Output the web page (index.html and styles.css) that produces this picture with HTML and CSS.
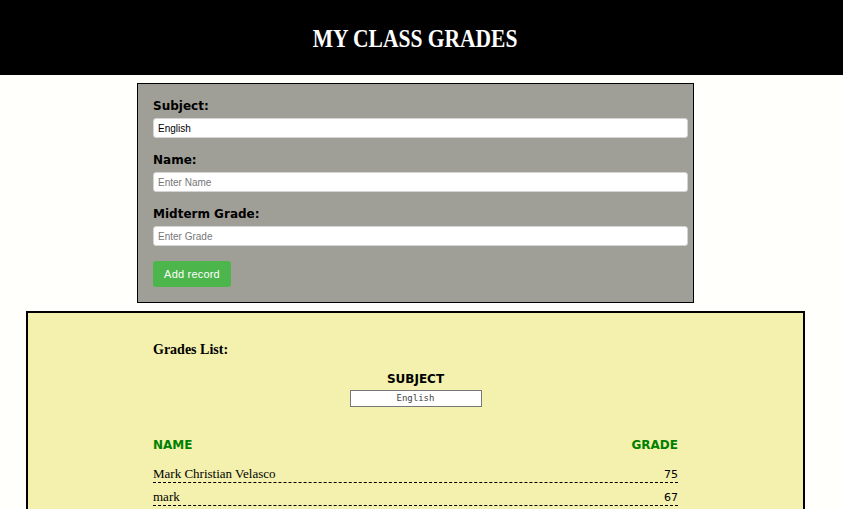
FILE: index.html
```html
<!DOCTYPE html>
<html lang="en">
<head>
<meta charset="utf-8">
<title>My Class Grades</title>
<link rel="stylesheet" href="styles.css">
</head>
<body>
<header class="top">
  <h1 class="title">MY CLASS GRADES</h1>
</header>
<main class="page">
  <form class="entry">
    <label class="field-label">Subject:</label>
    <input class="field" type="text" value="English">
    <label class="field-label">Name:</label>
    <input class="field" type="text" placeholder="Enter Name">
    <label class="field-label">Midterm Grade:</label>
    <input class="field" type="text" placeholder="Enter Grade">
    <button class="add-btn" type="button">Add record</button>
  </form>
  <section class="grades">
    <div class="grades-inner">
      <h2 class="grades-title">Grades List:</h2>
      <div class="subject">
        <h3 class="subject-title">SUBJECT</h3>
        <div class="subject-box">English</div>
      </div>
      <div class="list-head"><span>NAME</span><span>GRADE</span></div>
      <div class="row"><span class="row-name">Mark Christian Velasco</span><span class="row-grade">75</span></div>
      <div class="row"><span class="row-name">mark</span><span class="row-grade">67</span></div>
    </div>
  </section>
</main>
</body>
</html>
```
FILE: styles.css
```css
html, body {
  margin: 0;
  padding: 0;
}
body {
  background: #fffffb;
  font-family: "DejaVu Sans", Verdana, sans-serif;
  width: 843px;
  height: 509px;
  overflow: hidden;
}
.top {
  background: #000;
  height: 75px;
  box-sizing: border-box;
  padding: 3px 12px 0 0;
  display: flex;
  align-items: center;
  justify-content: center;
}
.title {
  margin: 0;
  color: #fff;
  font-family: "Liberation Serif", "Times New Roman", serif;
  font-weight: bold;
  font-size: 25px;
  transform: scaleX(0.86);
}
.page {
  width: 831px;
}
.entry {
  width: 557px;
  box-sizing: border-box;
  margin: 8px auto 0;
  border: 1px solid #000;
  background: #a09f97;
  padding: 15px 5px 15px 15px;
  display: flex;
  flex-direction: column;
  align-items: flex-start;
}
.field-label {
  font-weight: bold;
  font-size: 12px;
  line-height: 14px;
  color: #000;
  margin-bottom: 5px;
}
.field {
  width: 535px;
  height: 20px;
  box-sizing: border-box;
  margin: 0 0 15px;
  padding: 0 4px;
  border: 1px solid #d4d4d4;
  border-radius: 3px;
  background: #fff;
  font-family: "Liberation Sans", Arial, sans-serif;
  font-size: 10px;
  color: #000;
}
.field::placeholder {
  color: #777;
}
.add-btn {
  width: 78px;
  height: 26px;
  padding: 0;
  border: none;
  border-radius: 3px;
  background: #4cb64c;
  color: #fff;
  font-family: "Liberation Sans", Arial, sans-serif;
  font-size: 11px;
  letter-spacing: 0.2px;
}
.grades {
  width: 779px;
  box-sizing: border-box;
  margin: 8px auto 0;
  border: 2px solid #000;
  background: #f3f1ad;
  height: 220px;
}
.grades-inner {
  width: 525px;
  margin: 0 auto;
  padding-top: 29px;
}
.grades-title {
  margin: 0;
  font-family: "Liberation Serif", "Times New Roman", serif;
  font-weight: bold;
  font-size: 14px;
  line-height: 16px;
}
.subject {
  margin-top: 14px;
  display: flex;
  flex-direction: column;
  align-items: center;
}
.subject-title {
  margin: 0;
  font-size: 12px;
  line-height: 14px;
  font-weight: bold;
}
.subject-box {
  margin-top: 4px;
  width: 132px;
  height: 17px;
  box-sizing: border-box;
  border: 1px solid #777;
  background: #fff;
  text-align: center;
  font-family: "DejaVu Sans Mono", monospace;
  font-size: 9px;
  line-height: 15px;
  color: #444;
}
.list-head {
  margin-top: 31px;
  display: flex;
  justify-content: space-between;
  font-weight: bold;
  font-size: 12px;
  line-height: 15px;
  color: #008000;
}
.row {
  margin-top: 12px;
  display: flex;
  justify-content: space-between;
  align-items: baseline;
  height: 17px;
  border-bottom: 1px dashed #000;
}
.row + .row {
  margin-top: 5px;
}
.row-name {
  font-family: "Liberation Serif", "Times New Roman", serif;
  font-size: 13px;
  line-height: 18px;
}
.row-grade {
  font-size: 11px;
  line-height: 17px;
}
```
